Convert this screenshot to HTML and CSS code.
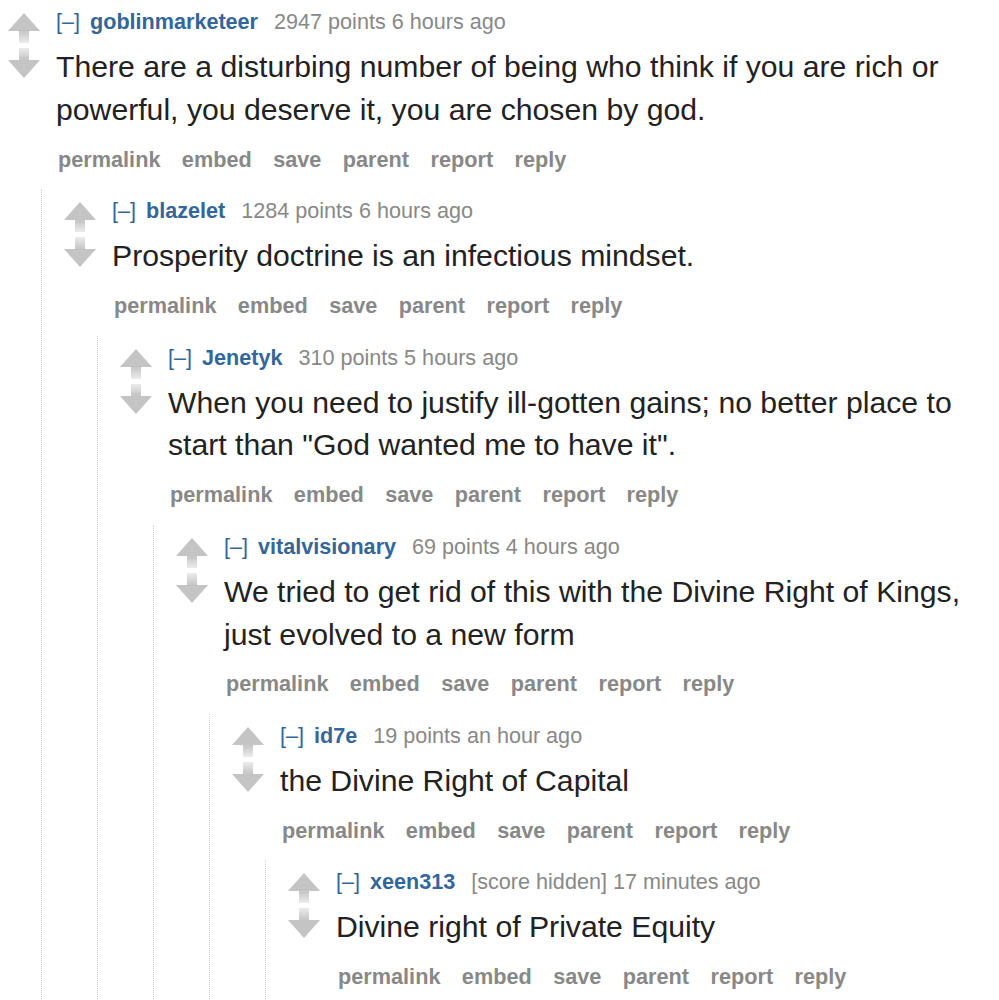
FILE: index.html
```html
<!DOCTYPE html>
<html>
<head>
<meta charset="utf-8">
<link rel="stylesheet" href="styles.css">
</head>
<body>
<svg width="0" height="0" class="defs" aria-hidden="true">
  <defs>
    <linearGradient id="fadeUp" x1="0" y1="0" x2="0" y2="1">
      <stop offset="0" stop-color="#c4c4c4"/>
      <stop offset="1" stop-color="#ececec"/>
    </linearGradient>
    <linearGradient id="fadeDown" x1="0" y1="0" x2="0" y2="1">
      <stop offset="0" stop-color="#ececec"/>
      <stop offset="1" stop-color="#c4c4c4"/>
    </linearGradient>
    <symbol id="arrows" viewBox="0 0 32 65">
      <polygon points="16,0 32,18 0,18" fill="#c4c4c4"/>
      <rect x="11" y="18" width="10" height="12" fill="url(#fadeUp)"/>
      <rect x="11" y="35" width="10" height="12" fill="url(#fadeDown)"/>
      <polygon points="0,47 32,47 16,65" fill="#c4c4c4"/>
    </symbol>
  </defs>
</svg>

<div class="comment">
  <div class="midcol"><svg class="arrows" width="32" height="65"><use href="#arrows"/></svg></div>
  <div class="entry">
    <p class="tagline"><a class="expand">[–]</a> <a class="author">goblinmarketeer</a> <span class="score">2947 points</span> <span class="time">6 hours ago</span></p>
    <div class="md"><p>There are a disturbing number of being who think if you are rich or powerful, you deserve it, you are chosen by god.</p></div>
    <ul class="buttons"><li>permalink</li><li>embed</li><li>save</li><li>parent</li><li>report</li><li>reply</li></ul>
  </div>
  <div class="child">
    <div class="comment">
      <div class="midcol"><svg class="arrows" width="32" height="65"><use href="#arrows"/></svg></div>
      <div class="entry">
        <p class="tagline"><a class="expand">[–]</a> <a class="author">blazelet</a> <span class="score">1284 points</span> <span class="time">6 hours ago</span></p>
        <div class="md"><p>Prosperity doctrine is an infectious mindset.</p></div>
        <ul class="buttons"><li>permalink</li><li>embed</li><li>save</li><li>parent</li><li>report</li><li>reply</li></ul>
      </div>
      <div class="child">
        <div class="comment">
          <div class="midcol"><svg class="arrows" width="32" height="65"><use href="#arrows"/></svg></div>
          <div class="entry">
            <p class="tagline"><a class="expand">[–]</a> <a class="author">Jenetyk</a> <span class="score">310 points</span> <span class="time">5 hours ago</span></p>
            <div class="md"><p>When you need to justify ill-gotten gains; no better place to start than "God wanted me to have it".</p></div>
            <ul class="buttons"><li>permalink</li><li>embed</li><li>save</li><li>parent</li><li>report</li><li>reply</li></ul>
          </div>
          <div class="child">
            <div class="comment">
              <div class="midcol"><svg class="arrows" width="32" height="65"><use href="#arrows"/></svg></div>
              <div class="entry">
                <p class="tagline"><a class="expand">[–]</a> <a class="author">vitalvisionary</a> <span class="score">69 points</span> <span class="time">4 hours ago</span></p>
                <div class="md"><p>We tried to get rid of this with the Divine Right of Kings, just evolved to a new form</p></div>
                <ul class="buttons"><li>permalink</li><li>embed</li><li>save</li><li>parent</li><li>report</li><li>reply</li></ul>
              </div>
              <div class="child">
                <div class="comment">
                  <div class="midcol"><svg class="arrows" width="32" height="65"><use href="#arrows"/></svg></div>
                  <div class="entry">
                    <p class="tagline"><a class="expand">[–]</a> <a class="author">id7e</a> <span class="score">19 points</span> <span class="time">an hour ago</span></p>
                    <div class="md"><p>the Divine Right of Capital</p></div>
                    <ul class="buttons"><li>permalink</li><li>embed</li><li>save</li><li>parent</li><li>report</li><li>reply</li></ul>
                  </div>
                  <div class="child">
                    <div class="comment">
                      <div class="midcol"><svg class="arrows" width="32" height="65"><use href="#arrows"/></svg></div>
                      <div class="entry">
                        <p class="tagline"><a class="expand">[–]</a> <a class="author">xeen313</a> <span class="score">[score hidden]</span> <span class="time">17 minutes ago</span></p>
                        <div class="md"><p>Divine right of Private Equity</p></div>
                        <ul class="buttons"><li>permalink</li><li>embed</li><li>save</li><li>parent</li><li>report</li><li>reply</li></ul>
                      </div>
                    </div>
                  </div>
                </div>
              </div>
            </div>
          </div>
        </div>
      </div>
    </div>
  </div>
</div>
</body>
</html>
```

FILE: styles.css
```css
html, body {
  background: #fff;
}
body {
  margin: 0 8px;
  font-family: "Liberation Sans", Arial, sans-serif;
  color: #222;
  overflow: hidden;
}
.defs {
  position: absolute;
  width: 0;
  height: 0;
}
.comment {
  display: grid;
  grid-template-columns: 32px 1fr;
  column-gap: 16px;
  padding-top: 7px;
}
.midcol {
  grid-column: 1;
  padding-top: 6px;
}
.arrows {
  display: block;
}
.entry {
  grid-column: 2;
  min-width: 0;
  padding-bottom: 14.6px;
}
.tagline {
  margin: 0;
  font-size: 21.6px;
  line-height: 30px;
  color: #888;
  white-space: nowrap;
}
.expand {
  color: #369;
  margin-right: 4px;
}
.author {
  color: #369;
  font-weight: bold;
  margin-right: 10px;
}
.md {
  margin-top: 9px;
}
.md p {
  margin: 0;
  font-size: 30.2px;
  line-height: 42.8px;
  color: #222;
}
.buttons {
  list-style: none;
  margin: 13px 0 0;
  padding: 0 0 0 2px;
  display: flex;
  gap: 21.4px;
  font-size: 21.7px;
  line-height: 30px;
  font-weight: bold;
  color: #888;
}
.child {
  grid-column: 1 / -1;
  margin-left: 33px;
  border-left: 1px dotted #d0d0ee;
  padding-left: 22px;
  padding-bottom: 8px;
}
```
